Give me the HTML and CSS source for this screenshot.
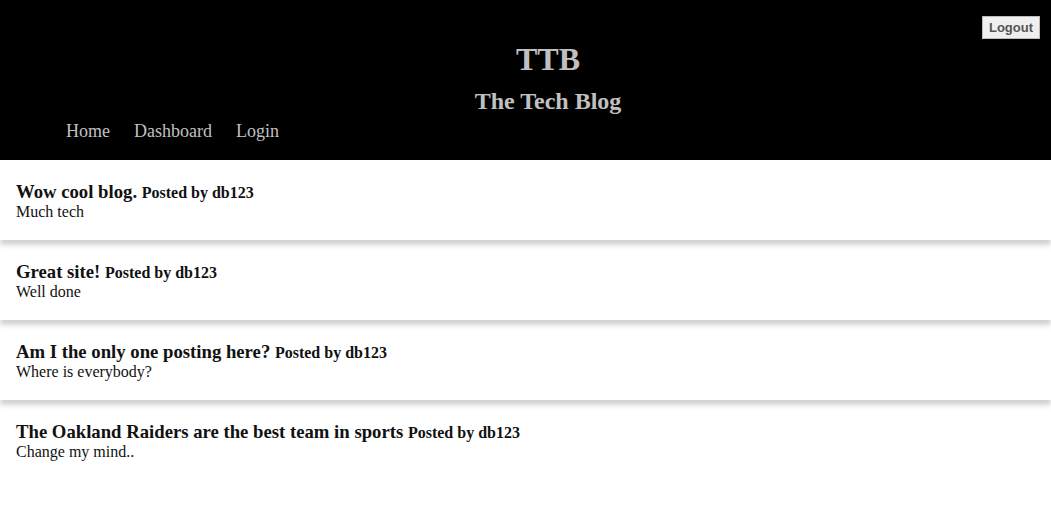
FILE: index.html
```html
<!DOCTYPE html>
<html lang="en">
<head>
<meta charset="utf-8">
<title>The Tech Blog</title>
<link rel="stylesheet" href="styles.css">
</head>
<body>
<header class="site-header">
  <button class="logout" type="button">Logout</button>
  <div class="brand">
    <h1 class="brand-short">TTB</h1>
    <h2 class="brand-long">The Tech Blog</h2>
  </div>
  <nav class="nav">
    <a href="#">Home</a>
    <a href="#">Dashboard</a>
    <a href="#">Login</a>
  </nav>
</header>
<main class="posts">
  <article class="post">
    <h3 class="post-title">Wow cool blog. <span class="post-author">Posted by db123</span></h3>
    <p class="post-body">Much tech</p>
  </article>
  <article class="post">
    <h3 class="post-title">Great site! <span class="post-author">Posted by db123</span></h3>
    <p class="post-body">Well done</p>
  </article>
  <article class="post">
    <h3 class="post-title">Am I the only one posting here? <span class="post-author">Posted by db123</span></h3>
    <p class="post-body">Where is everybody?</p>
  </article>
  <article class="post">
    <h3 class="post-title">The Oakland Raiders are the best team in sports <span class="post-author">Posted by db123</span></h3>
    <p class="post-body">Change my mind..</p>
  </article>
</main>
</body>
</html>
```
FILE: styles.css
```css
html, body {
  margin: 0;
  padding: 0;
  background: #fff;
  font-family: "Liberation Serif", "Times New Roman", serif;
  color: #111;
}

.site-header {
  position: relative;
  background: #000;
  color: #c0c0c0;
  padding: 42px 0 19px;
}

.logout {
  position: absolute;
  top: 16px;
  right: 11px;
  height: 23px;
  padding: 0 6px;
  font-family: "Liberation Sans", Arial, sans-serif;
  font-weight: bold;
  font-size: 13px;
  color: #555;
  background: #efefef;
  border: 1px solid #bbb;
  border-radius: 0;
}

.brand {
  padding-left: 45px;
  text-align: center;
}

.brand-short {
  margin: 0 0 11px;
  font-size: 32px;
  line-height: 35px;
}

.brand-long {
  margin: 0 0 6px;
  font-size: 24px;
  line-height: 27px;
}

.nav {
  display: flex;
  gap: 24px;
  padding-left: 66px;
  font-size: 18px;
  line-height: 20px;
}

.nav a {
  color: #c0c0c0;
  text-decoration: none;
}

.posts {
  display: flex;
  flex-direction: column;
  gap: 10px;
  padding-top: 10px;
}

.post {
  background: #fff;
  height: 59px;
  padding: 11px 16px 0;
  box-shadow: 0 5px 5px rgba(0, 0, 0, 0.18);
}

.post-title {
  margin: 0;
  font-size: 18.72px;
  line-height: 21px;
}

.post-author {
  font-size: 16px;
}

.post-body {
  margin: 0;
  font-size: 16px;
  line-height: 18px;
}
```
